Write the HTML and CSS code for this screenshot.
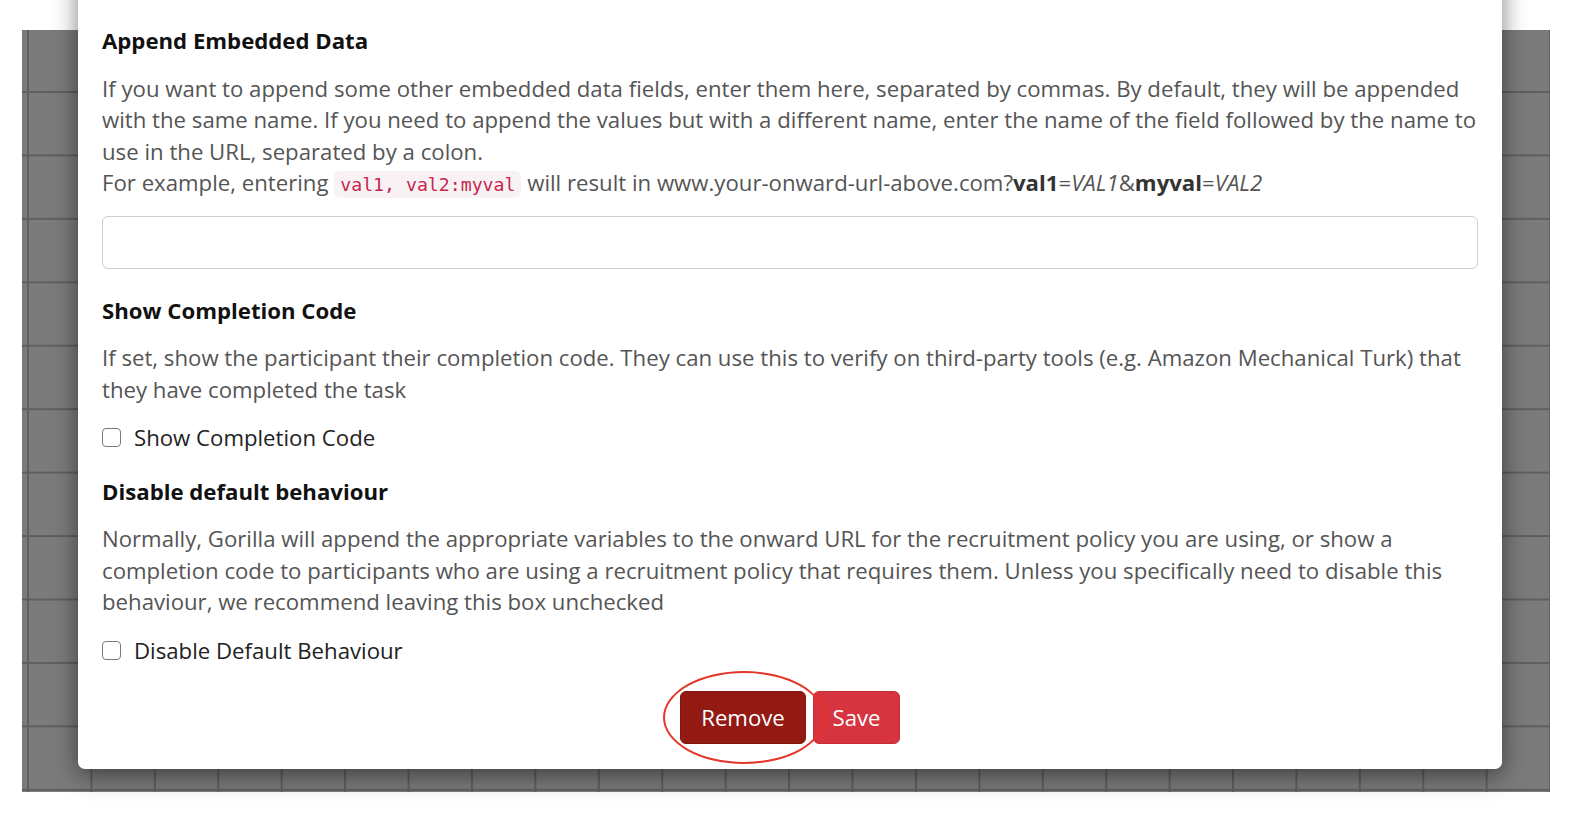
FILE: index.html
```html
<!DOCTYPE html>
<html>
<head>
<meta charset="utf-8">
<link rel="stylesheet" href="styles.css">
</head>
<body>
<div class="backdrop"></div>
<div class="modal">
  <div class="group">
    <div class="label">Append Embedded Data</div>
    <p class="help help-tight">If you want to append some other embedded data fields, enter them here, separated by commas. By default, they will be appended with the same name. If you need to append the values but with a different name, enter the name of the field followed by the name to use in the URL, separated by a colon.<br>For example, entering <code>val1, val2:myval</code> will result in www.your-onward-url-above.com?<b>val1</b>=<i>VAL1</i>&amp;<b>myval</b>=<i>VAL2</i></p>
    <input class="text-input" type="text">
  </div>
  <div class="group">
    <div class="label">Show Completion Code</div>
    <p class="help">If set, show the participant their completion code. They can use this to verify on third-party tools (e.g. Amazon Mechanical Turk) that they have completed the task</p>
    <label class="check"><span class="box"></span>Show Completion Code</label>
  </div>
  <div class="group">
    <div class="label">Disable default behaviour</div>
    <p class="help">Normally, Gorilla will append the appropriate variables to the onward URL for the recruitment policy you are using, or show a completion code to participants who are using a recruitment policy that requires them. Unless you specifically need to disable this behaviour, we recommend leaving this box unchecked</p>
    <label class="check"><span class="box"></span>Disable Default Behaviour</label>
  </div>
  <div class="actions">
    <span class="btn-wrap">
      <button class="btn btn-remove">Remove</button>
      <span class="ring"></span>
    </span>
    <button class="btn btn-save">Save</button>
  </div>
</div>
</body>
</html>
```
FILE: styles.css
```css
html, body {
  margin: 0;
  padding: 0;
  background: #ffffff;
  width: 1592px;
  height: 816px;
  overflow: hidden;
  position: relative;
  font-family: "Open Sans", "Noto Sans", sans-serif;
}
.backdrop {
  margin: 30px 0 0 22px;
  width: 1528px;
  height: 762px;
  background-color: #7b7b7b;
  background-image:
    linear-gradient(to right, #5f5f5f 0, #5f5f5f 2px, transparent 2px),
    linear-gradient(to bottom, #5f5f5f 0, #5f5f5f 2px, transparent 2px);
  background-size: 63.43px 63.45px, 63.43px 63.45px;
  background-position: 5px 0, 0 61px;
}
.modal {
  position: absolute;
  left: 78px;
  top: -40px;
  width: 1424px;
  box-sizing: border-box;
  padding: 65px 24px 25px 24px;
  background: #fff;
  border-radius: 0 0 7px 7px;
  box-shadow: 0 6px 24px rgba(0, 0, 0, 0.5);
}
.label {
  font-size: 22.2px;
  line-height: 31.5px;
  font-weight: 700;
  color: #111;
  margin-bottom: 16px;
}
.help {
  margin: 0 0 17px 0;
  font-size: 22.2px;
  line-height: 31.5px;
  color: #555;
}
.help-tight {
  margin-bottom: 15px;
}
.help b { color: #333; font-weight: 700; }
.help i { font-style: italic; }
code {
  font-family: "DejaVu Sans Mono", "Liberation Mono", monospace;
  font-size: 18.2px;
  color: #c7254e;
  background: #f9f2f4;
  padding: 3px 6px;
  border-radius: 6px;
}
.text-input {
  display: block;
  box-sizing: border-box;
  width: 100%;
  height: 53px;
  border: 1.5px solid #cfcfcf;
  border-radius: 6px;
  margin: 0 0 26px 0;
  background: #fff;
}
.check {
  display: flex;
  align-items: center;
  gap: 13px;
  font-size: 22.2px;
  line-height: 31.5px;
  color: #222;
  margin-bottom: 22px;
}
.box {
  width: 19px;
  height: 19px;
  box-sizing: border-box;
  border: 1.5px solid #7a7a7a;
  border-radius: 4px;
  background: #fff;
}
.actions {
  display: flex;
  justify-content: center;
  gap: 7px;
  margin-top: 25px;
}
.btn-wrap {
  position: relative;
  display: inline-flex;
}
.btn {
  height: 53px;
  box-sizing: border-box;
  border: 1px solid transparent;
  border-radius: 6px;
  font-family: "Open Sans", "Noto Sans", sans-serif;
  font-size: 22.2px;
  color: #fff;
  padding: 0;
  cursor: pointer;
}
.btn-remove {
  width: 126px;
  background: #921a13;
  border-color: #7f150f;
}
.btn-save {
  width: 87px;
  background: #d6343f;
  border-color: #c52e38;
}
.ring {
  position: absolute;
  left: -17px;
  top: -20px;
  width: 162px;
  height: 93px;
  box-sizing: border-box;
  border: 2px solid #e5352a;
  border-radius: 50%;
  pointer-events: none;
}
```
